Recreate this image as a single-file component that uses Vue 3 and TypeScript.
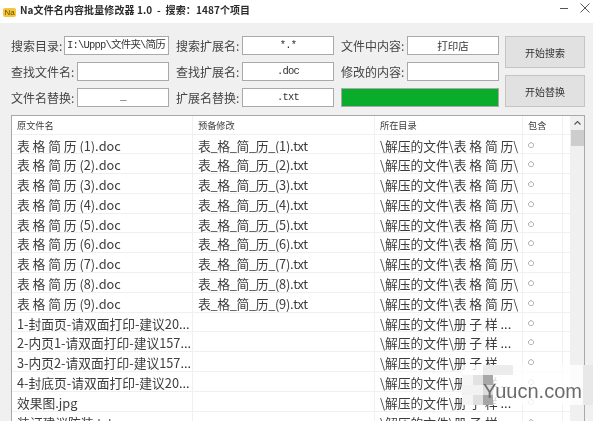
<script setup lang="ts">
interface Row { name: string; next: string; dir: string }
const dirA = '\\解压的文件\\表 格 简 历\\'
const dirB = '\\解压的文件\\册 子 样 ...'
const rows: Row[] = [
  ...Array.from({ length: 9 }, (_, i) => ({
    name: `表 格 简 历 (${i + 1}).doc`,
    next: `表_格_简_历_(${i + 1}).txt`,
    dir: dirA,
  })),
  { name: '1-封面页-请双面打印-建议20...', next: '', dir: dirB },
  { name: '2-内页1-请双面打印-建议157...', next: '', dir: dirB },
  { name: '3-内页2-请双面打印-建议157...', next: '', dir: dirB },
  { name: '4-封底页-请双面打印-建议20...', next: '', dir: dirB },
  { name: '效果图.jpg', next: '', dir: dirB },
  { name: '装订建议防装.txt', next: '', dir: dirB },
]
const blocks = [
  { x: 21, y: 0, w: 30, h: 10, c: '#ececec' },
  { x: 0, y: 10, w: 11, h: 10, c: '#f5f5f5' },
  { x: 11, y: 10, w: 10, h: 10, c: '#e2e2e2' },
  { x: 21, y: 10, w: 10, h: 10, c: '#a8a8a8' },
  { x: 0, y: 20, w: 21, h: 10, c: '#f2f2f2' },
  { x: 21, y: 20, w: 10, h: 10, c: '#dcdcdc' },
  { x: 0, y: 30, w: 11, h: 10, c: '#f5f5f5' },
  { x: 11, y: 30, w: 10, h: 10, c: '#e0e0e0' },
  { x: 21, y: 30, w: 10, h: 10, c: '#a6a6a6' },
  { x: 121, y: 0, w: 10, h: 40, c: '#e8e8e8' },
]
</script>

<template>
  <div class="window">
    <header class="titlebar">
      <span class="logo">Na</span>
      <span class="title">Na文件名内容批量修改器 1.0&nbsp; -&nbsp; 搜索：1487个项目</span>
      <svg class="winbtn" width="30" height="12" viewBox="0 0 30 12" aria-hidden="true">
        <path d="M0 6.5H8" stroke="#555" stroke-width="1" fill="none" />
        <path d="M20.5 1.5L29.5 10.5M29.5 1.5L20.5 10.5" stroke="#555" stroke-width="1" fill="none" />
      </svg>
    </header>

    <main class="body">
      <section class="form">
        <div class="fields">
          <label class="field first">搜索目录:<span class="input mono">I:\Uppp\文件夹\简历</span></label>
          <label class="field">搜索扩展名:<span class="input mono center">*.*</span></label>
          <label class="field">文件中内容:<span class="input center big">打印店</span></label>

          <label class="field">查找文件名:<span class="input"></span></label>
          <label class="field">查找扩展名:<span class="input mono center">.doc</span></label>
          <label class="field">修改的内容:<span class="input"></span></label>

          <label class="field">文件名替换:<span class="input mono center">_</span></label>
          <label class="field">扩展名替换:<span class="input mono center">.txt</span></label>
          <div class="progress"><div class="bar"></div></div>
        </div>
        <div class="actions">
          <button class="btn">开始搜索</button>
          <button class="btn">开始替换</button>
        </div>
      </section>

      <section class="table">
        <div class="grid">
          <div class="row head">
            <span class="cell">原文件名</span>
            <span class="cell">预备修改</span>
            <span class="cell">所在目录</span>
            <span class="cell">包含</span>
            <span class="cell"></span>
          </div>
          <div v-for="(r, i) in rows" :key="i" class="row">
            <span class="cell">{{ r.name }}</span>
            <span class="cell tight">{{ r.next }}</span>
            <span class="cell">{{ r.dir }}</span>
            <span class="cell flag">○</span>
            <span class="cell"></span>
          </div>
        </div>
        <div class="scroll">
          <svg class="up" width="13" height="14" viewBox="0 0 13 14" aria-hidden="true">
            <path d="M3.5 8.5L6.5 5.5L9.5 8.5" stroke="#555" stroke-width="1.2" fill="none" />
          </svg>
          <div class="thumb"></div>
        </div>
      </section>

      <div class="mark">
        <span
          v-for="(b, i) in blocks"
          :key="i"
          class="block"
          :style="{ left: b.x + 'px', top: b.y + 'px', width: b.w + 'px', height: b.h + 'px', background: b.c }"
        ></span>
        <span class="mark-text">Yuucn.com</span>
      </div>
    </main>
  </div>
</template>

<style>
html, body { margin: 0; background: #f0f0f0; overflow: hidden; }
</style>

<style scoped>
.window {
  width: 593px;
  height: 421px;
  overflow: hidden;
  background: #f0f0f0;
  color: #333;
  font-family: "Noto Sans CJK SC", "Noto Sans", sans-serif;
  filter: blur(0.35px);
}
.titlebar {
  height: 23px;
  display: flex;
  align-items: center;
  background: #fff;
  padding: 0 3px 0 3px;
  box-sizing: border-box;
}
.logo {
  width: 13px;
  height: 9px;
  flex: none;
  margin-top: 1px;
  background: #f3c63c;
  border-radius: 2px;
  font: 8px/9px "Liberation Sans", sans-serif;
  color: #6a5200;
  text-align: center;
  overflow: hidden;
}
.title {
  margin-left: 4px;
  margin-top: -3px;
  font-size: 10px;
  line-height: 14px;
  letter-spacing: 0.1px;
  font-weight: 700;
  color: #2b2b2b;
  flex: 1;
  white-space: nowrap;
}
.winbtn { flex: none; align-self: flex-start; margin-top: 2px; }
.body {
  position: relative;
  height: 398px;
  padding: 13px 8px 0 11px;
  box-sizing: border-box;
}
.form {
  display: flex;
  gap: 6px;
  height: 71px;
}
.fields {
  width: 488px;
  display: grid;
  grid-template-columns: 158px 158px 158px;
  column-gap: 7px;
  grid-auto-rows: 19px;
  row-gap: 7px;
}
.field {
  display: flex;
  justify-content: space-between;
  align-items: center;
  font-size: 12px;
  line-height: 19px;
  white-space: nowrap;
  color: #444;
}
.input {
  width: 92px;
  height: 19px;
  box-sizing: border-box;
  background: #fff;
  border: 1px solid #a9a9a9;
  font-size: 12px;
  line-height: 17px;
  padding: 0 2px;
  overflow: hidden;
  color: #333;
}
.first .input { width: 105px; }
.mono {
  font-family: "Liberation Mono", "Noto Sans CJK SC", monospace;
  font-size: 10.5px;
  letter-spacing: -0.8px;
}
.center { text-align: center; }
.big { font-size: 10.5px; }
.progress {
  height: 19px;
  box-sizing: border-box;
  border: 1px solid #a9a9a9;
  background: #e6e6e6;
}
.bar { height: 100%; background: #0aad2b; }
.actions {
  width: 80px;
  display: flex;
  flex-direction: column;
  gap: 7px;
}
.btn {
  flex: 1;
  margin: 0;
  padding: 0;
  border: 1px solid #c4c4c4;
  background: #e1e1e1;
  font: 10px "Noto Sans CJK SC", sans-serif;
  color: #333;
}
.table {
  margin-top: 8px;
  width: 574px;
  height: 312px;
  box-sizing: border-box;
  border: 1px solid #a9a9a9;
  border-bottom: 0;
  background: #fff;
  display: flex;
  overflow: hidden;
}
.grid { flex: 1; min-width: 0; }
.row {
  display: grid;
  grid-template-columns: 181px 182px 148px 40px 8px;
  height: 19.8px;
  box-sizing: border-box;
  border-bottom: 1px solid #f0f0f0;
  font-size: 12.75px;
  line-height: 22px;
  color: #3c3c3c;
}
.row.head {
  height: 18.5px;
  font-size: 9.2px;
  line-height: 19px;
}
.cell {
  border-right: 1px solid #f0f0f0;
  padding-left: 5px;
  white-space: nowrap;
  overflow: hidden;
}
.tight { letter-spacing: -0.3px; }
.flag {
  font-family: "DejaVu Sans", sans-serif;
  font-size: 7px;
  line-height: 21px;
}
.scroll {
  width: 13px;
  flex: none;
  background: #f0f0f0;
}
.up { display: block; }
.thumb {
  height: 16px;
  background: #cdcdcd;
}
.mark {
  position: absolute;
  left: 462px;
  top: 342px;
  width: 131px;
  height: 40px;
  background: rgba(255, 255, 255, 0.8);
}
.block { position: absolute; }
.mark-text {
  position: absolute;
  left: 21px;
  top: 14px;
  font: 20px/24px "Liberation Sans", sans-serif;
  color: #6b6b6b;
  white-space: nowrap;
}
</style>
